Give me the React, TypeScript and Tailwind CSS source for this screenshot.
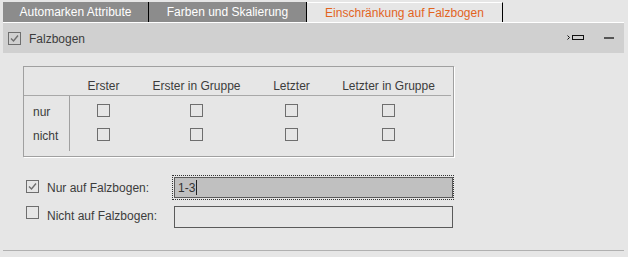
import React from "react";

function Box({ checked = false }: { checked?: boolean }) {
  return (
    <svg width="13" height="13" viewBox="0 0 13 13" className="block shrink-0">
      <rect x="0.5" y="0.5" width="12" height="12" fill="none" stroke="#6e6e6e" strokeWidth="1" />
      {checked && (
        <polyline points="3,6.5 5.5,9 10,3.5" fill="none" stroke="#6e6e6e" strokeWidth="1.4" />
      )}
    </svg>
  );
}

export default function App() {
  const cols = ["w-[67px]", "w-[119px]", "w-[71px]", "w-[123px]"];
  const heads = ["Erster", "Erster in Gruppe", "Letzter", "Letzter in Gruppe"];
  return (
    <div className="w-[628px] h-[257px] bg-[#e6e6e6] pt-[2px] pl-[3px] pr-[4px] font-['Liberation_Sans',Arial,sans-serif] text-[12px] leading-[14px] text-[#3c3c3c] overflow-hidden">
      {/* Tabs */}
      <div className="flex h-[20px]">
        <div className="w-[146px] bg-[#8c8c8c] border-r border-black text-white flex items-center justify-center">
          Automarken Attribute
        </div>
        <div className="w-[158px] bg-[#8c8c8c] border-r border-black text-white flex items-center justify-center">
          Farben und Skalierung
        </div>
        <div className="w-[196px] border-t border-white border-r border-r-black text-[#e2641e] flex items-center justify-center">
          Einschränkung auf Falzbogen
        </div>
      </div>
      <div className="h-px bg-white" />
      {/* Header */}
      <div className="h-[30px] bg-[#d0d0d0] flex items-center pl-[5px] pr-[10px]">
        <Box checked />
        <span className="ml-[8px] mt-[2px]">Falzbogen</span>
        <div className="ml-auto flex items-center gap-[20px]">
          <svg width="17" height="6" viewBox="0 0 17 6" className="block">
            <polyline points="0.5,0.5 2.5,2.5 0.5,4.5" fill="none" stroke="#111" strokeWidth="1" />
            <rect x="5.5" y="0.5" width="11" height="4" fill="none" stroke="#111" strokeWidth="1" />
          </svg>
          <div className="w-[10px] h-[2px] bg-[#555]" />
        </div>
      </div>
      {/* Group box */}
      <div className="mt-[13px] ml-[20px] w-[431px] h-[91px] border border-[#a0a0a0] shadow-[1px_1px_0_#ffffff]">
        <div className="flex h-[29px] border-b border-[#a8a8a8] mr-[2px] pt-[12px]">
          <div className="w-[46px]" />
          {heads.map((h, i) => (
            <div key={h} className={`${cols[i]} text-center`}>
              {h}
            </div>
          ))}
        </div>
        <div className="flex pt-[0px]">
          <div className="w-[46px] h-[55px] border-r border-[#a0a0a0] pl-[9px] pt-[9px] flex flex-col gap-[10px]">
            <span>nur</span>
            <span>nicht</span>
          </div>
          {cols.map((c, i) => (
            <div key={i} className={`${c} flex flex-col items-center pt-[8px] gap-[11px]`}>
              <Box />
              <Box />
            </div>
          ))}
        </div>
      </div>
      {/* Lower rows */}
      <div className="mt-[18px] flex h-[26px]">
        <div className="pl-[23px] pt-[5px]">
          <Box checked />
        </div>
        <span className="ml-[8px] pt-[6px] w-[125px]">Nur auf Falzbogen:</span>
        <div className="w-[282px] h-[25px] border border-dotted border-[#333] pl-[1px] py-[1px]">
          <div className="h-full border border-[#5a5a5a] bg-[#c0c0c0] flex items-center pl-[3px] text-[#333]">
            1-3<span className="w-px h-[15px] bg-[#222] ml-[1px]" />
          </div>
        </div>
      </div>
      <div className="mt-[5px] flex h-[22px]">
        <div className="pl-[23px] pt-[0px]">
          <Box />
        </div>
        <span className="ml-[8px] pt-[3px] w-[127px]">Nicht auf Falzbogen:</span>
        <div className="w-[279px] h-[22px] border border-[#5a5a5a]" />
      </div>
      <div className="mt-[22px] h-px bg-[#b0b0b0]" />
    </div>
  );
}
